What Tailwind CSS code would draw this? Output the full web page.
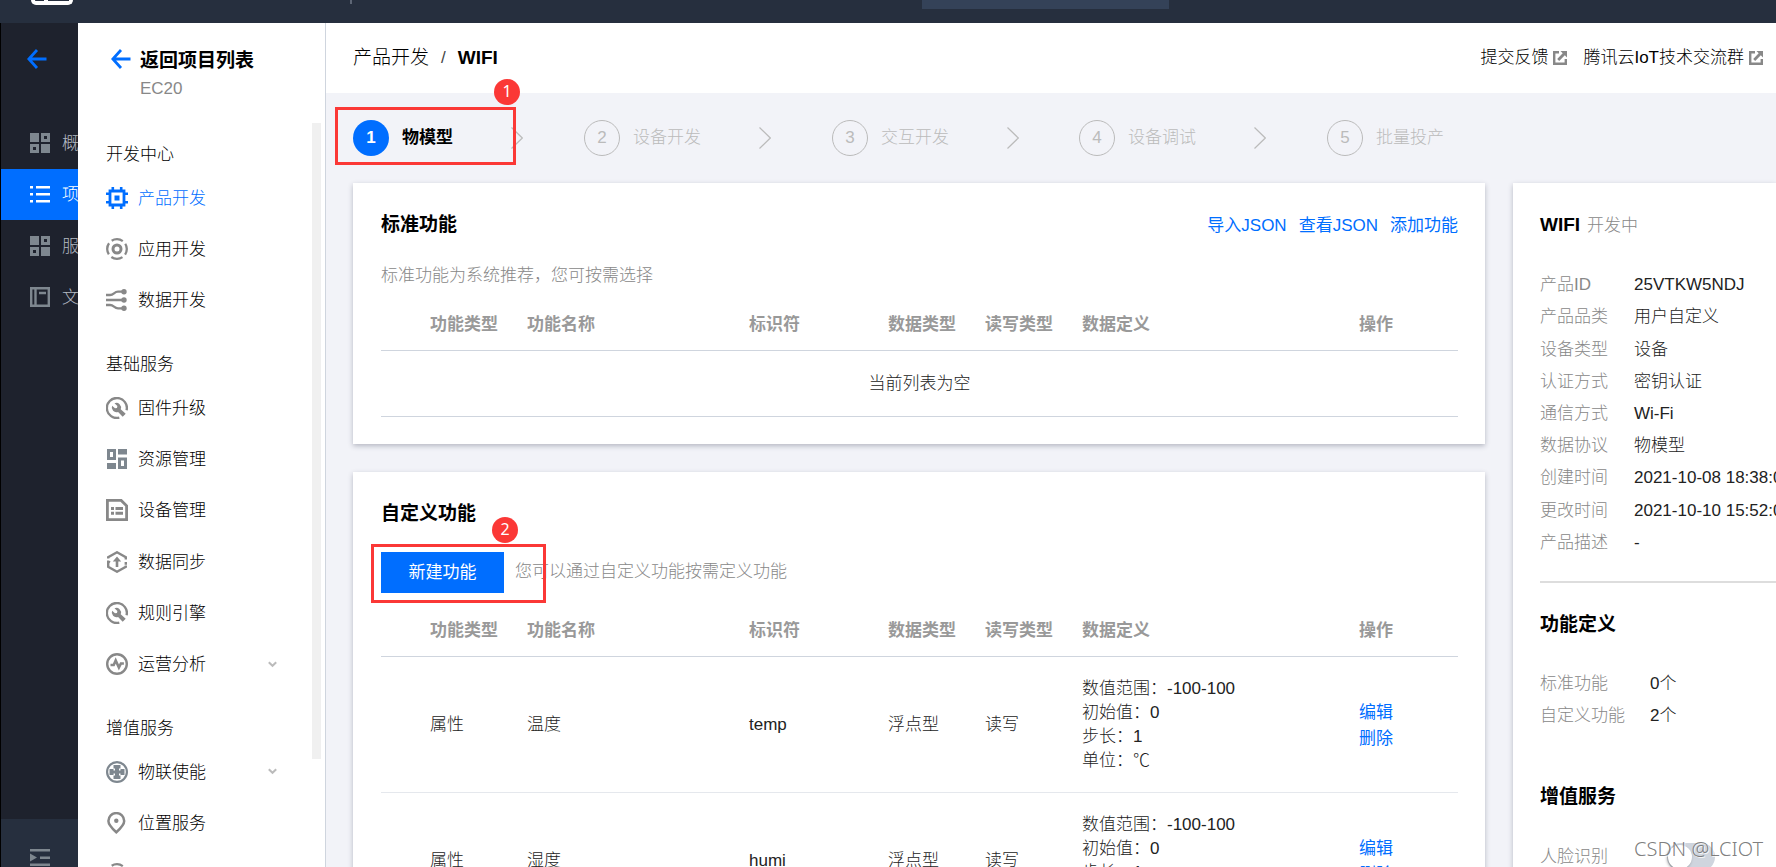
<!DOCTYPE html>
<html lang="zh-CN">
<head>
<meta charset="utf-8">
<title>物联网开发平台 - WIFI</title>
<script src="https://cdn.jsdelivr.net/npm/@tailwindcss/browser@4"></script>
</head>
<body class="flex h-screen flex-col overflow-hidden bg-[#f2f3f8] font-['Liberation_Sans','Noto_Sans_CJK_SC',sans-serif] text-[17px] leading-6 font-light text-black">

<svg class="hidden" aria-hidden="true">
  <symbol id="i-back" viewBox="0 0 20 20"><path d="M10 1 1.800 10 10 19M2 10H19.500" fill="none" stroke="currentColor" stroke-width="2.800"/></symbol>
  <symbol id="i-tiles" viewBox="0 0 20 20"><path d="M0 0h9v9H0zM11 11h9v9h-9zM11 0h9v9h-9zm3 3v3h3V3zM0 11h9v9H0zm3 3v3h3v-3z" fill="currentColor" fill-rule="evenodd"/></symbol>
  <symbol id="i-list" viewBox="0 0 20 20"><path d="M0 2h3v2.500H0zM6 2h14v2.500H6zM0 9h3v2.500H0zM6 9h14v2.500H6zM0 16h3v2.500H0zM6 16h14v2.500H6z" fill="currentColor"/></symbol>
  <symbol id="i-book" viewBox="0 0 20 20"><path d="M1.200 1.200h17.600v17.600H1.200zM5.500 1v18M9 6h7" fill="none" stroke="currentColor" stroke-width="2.400"/></symbol>
  <symbol id="i-fold" viewBox="0 0 20 20"><path d="M0 0h20v2.500H0zM0 4.500l7 4-7 4zM10 7.500h10V10H10zM0 14.500h20V17H0z" fill="currentColor"/></symbol>
  <symbol id="i-chip" viewBox="0 0 22 22"><path d="M4 4h14v14H4z" fill="none" stroke="currentColor" stroke-width="2.800"/><path d="M8.500 8.500h5v5h-5zM5.500 0h2.600v4H5.500zM13.900 0h2.600v4h-2.600zM5.500 18h2.600v4H5.500zM13.900 18h2.600v4h-2.600zM0 5.500h4v2.600H0zM0 13.900h4v2.600H0zM18 5.500h4v2.600h-4zM18 13.900h4v2.600h-4z" fill="currentColor"/></symbol>
  <symbol id="i-app" viewBox="0 0 22 22"><circle cx="11" cy="11" r="4" fill="none" stroke="currentColor" stroke-width="3"/><circle cx="11" cy="11" r="9.800" fill="none" stroke="currentColor" stroke-width="2.300" stroke-dasharray="11.800 3.590" stroke-dashoffset="5.900"/></symbol>
  <symbol id="i-flow" viewBox="0 0 22 22"><path d="M0 6h4c4 0 4-3.300 8-3.300h6M0 11h18M0 16h4c4 0 4 3.300 8 3.300h6" fill="none" stroke="currentColor" stroke-width="2.300"/><g fill="currentColor"><circle cx="18" cy="2.700" r="2.700"/><circle cx="18" cy="11" r="2.700"/><circle cx="18" cy="19.300" r="2.700"/></g></symbol>
  <symbol id="i-wrench" viewBox="0 0 22 22"><path d="M20.600 13.300A10 10 0 1 0 13.300 20.700" fill="none" stroke="currentColor" stroke-width="2.400"/><path d="M8.500 6.200a4.700 4.700 0 0 1 6.200 6l5 4.600-3 3-4.600-4.900a4.700 4.700 0 0 1-6-6.200l2.900 2.600 2-.400.400-2z" fill="currentColor"/></symbol>
  <symbol id="i-panels" viewBox="0 0 22 22"><path d="M1 1h9v11H1zm3 3v5h3V4zM12 1h9v5.500h-9zM1 15h9v6H1zM12 9.500h9V21h-9zm3 3V18h3v-5.500z" fill="currentColor" fill-rule="evenodd"/></symbol>
  <symbol id="i-device" viewBox="0 0 22 22"><path d="M1.400 1.400h13.800l5.400 5.400v13.800H1.400z" fill="none" stroke="currentColor" stroke-width="2.800"/><path d="M5 8h3v3H5zM9.500 8H17v3H9.500zM5 12.800h3v3H5zM9.500 12.800H17v3H9.500z" fill="currentColor"/></symbol>
  <symbol id="i-sync" viewBox="0 0 22 22"><path d="M2.200 7.500 2.200 6.200 11 1.300 19.800 6.200 19.800 8.500M19.800 14.500 19.800 15.800 11 20.700 2.200 15.800 2.200 9.500M2.200 10.500 4 11.600M19.800 13.800 19.800 11" fill="none" stroke="currentColor" stroke-width="2.400"/><path d="M11 5.500l4.200 5h-2.900V16H9.700v-5.500H6.800z" fill="currentColor"/></symbol>
  <symbol id="i-pulse" viewBox="0 0 22 22"><circle cx="11" cy="11" r="9.800" fill="none" stroke="currentColor" stroke-width="2.400"/><path d="M4.500 12h3.200l2-4.500 3.200 7 2-4h3" fill="none" stroke="currentColor" stroke-width="2.600"/></symbol>
  <symbol id="i-enable" viewBox="0 0 22 22"><circle cx="11" cy="11" r="9.900" fill="none" stroke="currentColor" stroke-width="2.200"/><path d="M7.500 4h7v3.500H13v2h1.500V8h4v6h-4v-1.500H13v2h1.500V18h-7v-3.500H9v-2H7.500V14h-4V8h4v1.500H9v-2H7.500z" fill="currentColor"/></symbol>
  <symbol id="i-pin" viewBox="0 0 22 22"><path d="M10.300 20.300C5 15.500 2.400 12.600 2.400 9a7.900 7.900 0 0 1 15.800 0c0 3.600-2.600 6.500-7.900 11.300z" fill="none" stroke="currentColor" stroke-width="2.500"/><circle cx="10.300" cy="8.800" r="2.200" fill="currentColor"/></symbol>
  <symbol id="i-down" viewBox="0 0 9 7"><path d="M.800 1.200 4.500 4.800 8.200 1.200" fill="none" stroke="currentColor" stroke-width="2"/></symbol>
  <symbol id="i-ext" viewBox="0 0 14 14"><path d="M6 0v2.400H2.400v9.200h9.200V8H14v6H0V0z" fill="currentColor"/><path d="M7.500 0H14v6.500l-2.200-2.200-5.600 5.600-2-2L9.700 2.200z" fill="currentColor"/></symbol>
  <symbol id="i-next" viewBox="0 0 12 22"><path d="M.500.500 11.300 11 .500 21.500" fill="none" stroke="currentColor" stroke-width="1.200"/></symbol>
</svg>

<!-- Top bar -->
<header class="flex h-[23px] shrink-0 items-start bg-[#262f3e]">
  <div class="ml-[31px] flex h-[5px] w-[42px] items-start rounded-b-2xl border-x-4 border-b-4 border-white pl-[9px]"><span class="h-[2px] w-[4px] bg-white"></span></div>
  <div class="ml-[277px] h-1 w-[2px] bg-[#5d6675]"></div>
  <div class="ml-[570px] h-[9px] w-[247px] bg-[#344258]"></div>
</header>

<div class="flex min-h-0 flex-1">
  <!-- Collapsed primary navigation -->
  <nav class="flex w-[78px] shrink-0 flex-col overflow-hidden border-l border-black bg-[#1e222d] text-[#b4bac3]">
    <a href="#" aria-label="返回" class="mt-[26px] ml-[26px] size-5 text-[#006eff]"><svg class="size-5"><use href="#i-back"/></svg></a>
    <div class="mt-[48px] grid h-[206px] auto-rows-fr whitespace-nowrap">
      <a href="#" class="flex items-center gap-3 pl-[29px]"><svg class="size-5 shrink-0 text-[#7e878f]"><use href="#i-tiles"/></svg><span class="pt-[2px]">概览</span></a>
      <a href="#" class="flex items-center gap-3 bg-[#006eff] pl-[29px] text-white"><svg class="size-5 shrink-0"><use href="#i-list"/></svg><span class="pt-[2px]">项目管理</span></a>
      <a href="#" class="flex items-center gap-3 pl-[29px]"><svg class="size-5 shrink-0 text-[#7e878f]"><use href="#i-tiles"/></svg><span class="pt-[2px]">服务</span></a>
      <a href="#" class="flex items-center gap-3 pl-[29px]"><svg class="size-5 shrink-0 text-[#7e878f]"><use href="#i-book"/></svg><span class="pt-[2px]">文档</span></a>
    </div>
    <button aria-label="展开导航" class="mt-auto flex h-12 shrink-0 items-start bg-[#262f3e] pt-[30px] pl-[29px] text-[#7e878f]"><svg class="size-5 shrink-0"><use href="#i-fold"/></svg></button>
  </nav>

  <!-- Project navigation -->
  <aside class="flex w-[248px] shrink-0 flex-col border-r border-[#cfd5de] bg-white">
    <div class="flex h-[93px] shrink-0 gap-[9px] pt-[24px] pl-[33px]">
      <a href="#" aria-label="返回项目列表" class="mt-[2px] size-5 text-[#006eff]"><svg class="size-5"><use href="#i-back"/></svg></a>
      <div>
        <h2 class="text-[19px] leading-7 font-bold">返回项目列表</h2>
        <p class="mt-[2px] text-[#888]">EC20</p>
      </div>
    </div>
    <div class="flex min-h-0 flex-1 overflow-hidden">
      <div class="min-w-0 flex-1 pl-[28px] text-[#888]">
        <h3 class="h-14 pt-[27px] font-light text-black">开发中心</h3>
        <div class="grid h-[154px] auto-rows-fr">
          <a href="#" class="flex items-center gap-[10px] text-[#006eff]"><svg class="size-[22px]"><use href="#i-chip"/></svg><span class="pt-[2px]">产品开发</span></a>
          <a href="#" class="flex items-center gap-[10px]"><svg class="size-[22px]"><use href="#i-app"/></svg><span class="pt-[2px] text-black">应用开发</span></a>
          <a href="#" class="flex items-center gap-[10px]"><svg class="size-[22px]"><use href="#i-flow"/></svg><span class="pt-[2px] text-black">数据开发</span></a>
        </div>
        <h3 class="h-14 pt-[27px] font-light text-black">基础服务</h3>
        <div class="grid h-[308px] auto-rows-fr">
          <a href="#" class="flex items-center gap-[10px]"><svg class="size-[22px]"><use href="#i-wrench"/></svg><span class="pt-[2px] text-black">固件升级</span></a>
          <a href="#" class="flex items-center gap-[10px]"><svg class="size-[22px] text-[#7e878f]"><use href="#i-panels"/></svg><span class="pt-[2px] text-black">资源管理</span></a>
          <a href="#" class="flex items-center gap-[10px]"><svg class="size-[22px]"><use href="#i-device"/></svg><span class="pt-[2px] text-black">设备管理</span></a>
          <a href="#" class="flex items-center gap-[10px]"><svg class="size-[22px]"><use href="#i-sync"/></svg><span class="pt-[2px] text-black">数据同步</span></a>
          <a href="#" class="flex items-center gap-[10px]"><svg class="size-[22px]"><use href="#i-wrench"/></svg><span class="pt-[2px] text-black">规则引擎</span></a>
          <a href="#" class="flex items-center gap-[10px] pr-[35px]"><svg class="size-[22px]"><use href="#i-pulse"/></svg><span class="pt-[2px] text-black">运营分析</span><svg class="ml-auto h-[7px] w-[9px] text-[#bbb]"><use href="#i-down"/></svg></a>
        </div>
        <h3 class="h-14 pt-[27px] font-light text-black">增值服务</h3>
        <div class="grid h-[154px] auto-rows-fr">
          <a href="#" class="flex items-center gap-[10px] pr-[35px]"><svg class="size-[22px] text-[#7e878f]"><use href="#i-enable"/></svg><span class="pt-[2px] text-black">物联使能</span><svg class="ml-auto h-[7px] w-[9px] text-[#bbb]"><use href="#i-down"/></svg></a>
          <a href="#" class="flex items-center gap-[10px]"><svg class="size-[22px]"><use href="#i-pin"/></svg><span class="pt-[2px] text-black">位置服务</span></a>
          <a href="#" aria-label="更多服务" class="flex items-center"><svg class="size-[22px]"><use href="#i-app"/></svg></a>
        </div>
      </div>
      <div class="mt-[7px] mr-1 mb-[108px] w-[9px] shrink-0 bg-[#f0f0f0]"></div>
    </div>
  </aside>

  <!-- Main column -->
  <main class="flex min-w-0 flex-1 flex-col overflow-hidden">
    <div class="flex h-[70px] shrink-0 items-center bg-white pr-[13px] pl-[27px]">
      <nav class="flex items-center gap-3 text-[19px] leading-7"><a href="#">产品开发</a><span class="text-[17px] text-[#444]">/</span><span class="font-bold">WIFI</span></nav>
      <div class="ml-auto flex items-center gap-4">
        <a href="#" class="flex items-center gap-[5px]">提交反馈<svg class="size-[14px] text-[#888]"><use href="#i-ext"/></svg></a>
        <a href="#" class="flex items-center gap-[5px]">腾讯云IoT技术交流群<svg class="size-[14px] text-[#888]"><use href="#i-ext"/></svg></a>
      </div>
    </div>

    <ol class="flex h-[90px] shrink-0 items-center pl-[27px] whitespace-nowrap text-[#bbb]">
      <li class="relative flex items-center font-bold text-black">
        <span class="flex size-9 items-center justify-center rounded-full bg-[#006eff] text-white">1</span><span class="ml-[13px]">物模型</span>
        <svg class="mr-[61px] ml-[58px] h-[22px] w-3 text-[#bbb]"><use href="#i-next"/></svg>
        <span class="absolute -top-[13px] -left-[18px] h-[58px] w-[181px] border-[3px] border-[#fb3836]"></span>
        <span class="absolute -top-[41px] left-[141px] flex size-[26px] items-center justify-center rounded-full bg-[#fb3836] pb-[2px] font-['Noto_Sans',sans-serif] text-[16px] font-normal text-white">1</span>
      </li>
      <li class="flex items-center"><span class="flex size-9 items-center justify-center rounded-full border border-[#bbb]">2</span><span class="ml-[13px]">设备开发</span><svg class="mr-[61px] ml-[58px] h-[22px] w-3"><use href="#i-next"/></svg></li>
      <li class="flex items-center"><span class="flex size-9 items-center justify-center rounded-full border border-[#bbb]">3</span><span class="ml-[13px]">交互开发</span><svg class="mr-[60px] ml-[58px] h-[22px] w-3"><use href="#i-next"/></svg></li>
      <li class="flex items-center"><span class="flex size-9 items-center justify-center rounded-full border border-[#bbb]">4</span><span class="ml-[13px]">设备调试</span><svg class="mr-[61px] ml-[58px] h-[22px] w-3"><use href="#i-next"/></svg></li>
      <li class="flex items-center"><span class="flex size-9 items-center justify-center rounded-full border border-[#bbb]">5</span><span class="ml-[13px]">批量投产</span></li>
    </ol>

    <div class="flex items-start gap-7 pl-[27px]">
      <div class="flex min-w-0 flex-1 flex-col gap-7">
        <section class="bg-white pt-7 pr-[27px] pb-[27px] pl-7 shadow-[0_2px_5px_rgba(54,58,80,0.32)]">
          <div class="flex items-center">
            <h2 class="text-[19px] leading-7 font-bold">标准功能</h2>
            <div class="ml-auto flex gap-3 pt-[2px] font-normal text-[#006eff]"><a href="#">导入JSON</a><a href="#">查看JSON</a><a href="#">添加功能</a></div>
          </div>
          <p class="mt-[25px] text-[#888]">标准功能为系统推荐，您可按需选择</p>
          <table class="mt-[10px] w-full table-fixed border-collapse text-left text-[#222]">
            <colgroup><col class="w-[36px]"><col class="w-[97px]"><col class="w-[222px]"><col class="w-[139px]"><col class="w-[97px]"><col class="w-[97px]"><col><col class="w-[112px]"></colgroup>
            <thead><tr class="h-[52px] border-b border-[#cfd5de] whitespace-nowrap text-[#999]">
              <th></th><th class="pt-[2px] pl-[13px]">功能类型</th><th class="pt-[2px] pl-[13px]">功能名称</th><th class="pt-[2px] pl-[13px]">标识符</th><th class="pt-[2px] pl-[13px]">数据类型</th><th class="pt-[2px] pl-[13px]">读写类型</th><th class="pt-[2px] pl-[13px]">数据定义</th><th class="pt-[2px] pl-[13px]">操作</th>
            </tr></thead>
            <tbody><tr class="h-[66px] border-b border-[#cfd5de]"><td colspan="8" class="pt-[2px] text-center">当前列表为空</td></tr></tbody>
          </table>
        </section>

        <section class="bg-white pt-7 pr-[27px] pb-7 pl-7 shadow-[0_2px_5px_rgba(54,58,80,0.32)]">
          <h2 class="text-[19px] leading-7 font-bold">自定义功能</h2>
          <div class="relative mt-6 flex items-center gap-[11px]">
            <button class="h-[41px] w-[123px] bg-[#006eff] pt-[2px] font-normal text-white">新建功能</button>
            <p class="text-[#888]">您可以通过自定义功能按需定义功能</p>
            <span class="absolute -top-2 -left-[10px] h-[59px] w-[175px] border-[3px] border-[#fb3836]"></span>
            <span class="absolute -top-[35px] left-[111px] flex size-[26px] items-center justify-center rounded-full bg-[#fb3836] pb-[2px] font-['Noto_Sans',sans-serif] text-[16px] font-normal text-white">2</span>
          </div>
          <table class="mt-[11px] w-full table-fixed border-collapse text-left text-[#222]">
            <colgroup><col class="w-[36px]"><col class="w-[97px]"><col class="w-[222px]"><col class="w-[139px]"><col class="w-[97px]"><col class="w-[97px]"><col><col class="w-[112px]"></colgroup>
            <thead><tr class="h-[53px] border-b border-[#cfd5de] whitespace-nowrap text-[#999]">
              <th></th><th class="pt-[2px] pl-[13px]">功能类型</th><th class="pt-[2px] pl-[13px]">功能名称</th><th class="pt-[2px] pl-[13px]">标识符</th><th class="pt-[2px] pl-[13px]">数据类型</th><th class="pt-[2px] pl-[13px]">读写类型</th><th class="pt-[2px] pl-[13px]">数据定义</th><th class="pt-[2px] pl-[13px]">操作</th>
            </tr></thead>
            <tbody>
              <tr class="h-[136px] border-b border-[#e5e8ed]">
                <td></td><td class="pl-[13px]">属性</td><td class="pl-[13px]">温度</td><td class="pl-[13px]">temp</td><td class="pl-[13px]">浮点型</td><td class="pl-[13px]">读写</td>
                <td class="pl-[13px]">数值范围：-100-100<br>初始值：0<br>步长：1<br>单位：℃</td>
                <td class="pt-[2px] pl-[13px] leading-[26px] font-normal text-[#006eff]"><a href="#">编辑</a><br><a href="#">删除</a></td>
              </tr>
              <tr class="h-[136px] border-b border-[#e5e8ed]">
                <td></td><td class="pl-[13px]">属性</td><td class="pl-[13px]">湿度</td><td class="pl-[13px]">humi</td><td class="pl-[13px]">浮点型</td><td class="pl-[13px]">读写</td>
                <td class="pl-[13px]">数值范围：-100-100<br>初始值：0<br>步长：1<br>单位：%</td>
                <td class="pt-[2px] pl-[13px] leading-[26px] font-normal text-[#006eff]"><a href="#">编辑</a><br><a href="#">删除</a></td>
              </tr>
            </tbody>
          </table>
        </section>
      </div>

      <section class="relative w-[263px] shrink-0 bg-white pt-7 pb-24 pl-[27px] whitespace-nowrap text-[#222] shadow-[0_2px_5px_rgba(54,58,80,0.32)]">
        <h2 class="flex items-center gap-[7px] text-[19px] leading-7 font-bold text-black">WIFI<span class="pt-[2px] text-[17px] leading-6 font-light text-[#888]">开发中</span></h2>
        <dl class="mt-[30px] grid h-[290px] auto-rows-fr grid-cols-[94px_1fr] items-center overflow-hidden">
          <dt class="text-[#888]">产品ID</dt><dd>25VTKW5NDJ</dd>
          <dt class="text-[#888]">产品品类</dt><dd>用户自定义</dd>
          <dt class="text-[#888]">设备类型</dt><dd>设备</dd>
          <dt class="text-[#888]">认证方式</dt><dd>密钥认证</dd>
          <dt class="text-[#888]">通信方式</dt><dd>Wi-Fi</dd>
          <dt class="text-[#888]">数据协议</dt><dd>物模型</dd>
          <dt class="text-[#888]">创建时间</dt><dd>2021-10-08 18:38:05</dd>
          <dt class="text-[#888]">更改时间</dt><dd>2021-10-10 15:52:04</dd>
          <dt class="text-[#888]">产品描述</dt><dd>-</dd>
        </dl>
        <hr class="mt-[22px] border-t-2 border-[#ddd]">
        <h2 class="mt-7 text-[19px] leading-7 font-bold text-black">功能定义</h2>
        <dl class="mt-[29px] grid h-16 auto-rows-fr grid-cols-[110px_1fr] items-center">
          <dt class="text-[#888]">标准功能</dt><dd>0个</dd>
          <dt class="text-[#888]">自定义功能</dt><dd>2个</dd>
        </dl>
        <h2 class="mt-[51px] text-[19px] leading-7 font-bold text-black">增值服务</h2>
        <div class="mt-8 flex items-start text-[#888]">
          <label for="face" class="w-[127px] pt-[2px]">人脸识别</label>
          <input id="face" type="checkbox" role="switch" class="h-7 w-12 appearance-none rounded-full bg-[#cfd5de] before:mt-[2px] before:ml-px before:block before:size-6 before:rounded-full before:bg-white before:shadow-[-1px_1px_3px_rgba(0,0,0,0.35)]">
        </div>
        <span class="absolute top-[652px] left-[121px] font-['Noto_Sans',sans-serif] text-[20px] leading-7 text-[#6e6e6e]/90 text-shadow-[1px_1px_0_rgba(255,255,255,0.8)]">CSDN @LCIOT</span>
      </section>
    </div>
  </main>
</div>
</body>
</html>
